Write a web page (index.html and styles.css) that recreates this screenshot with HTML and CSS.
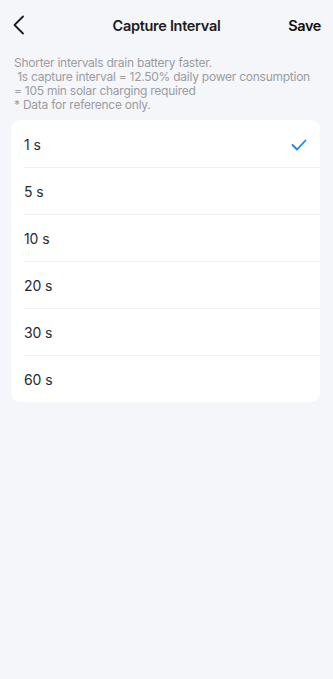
FILE: index.html
```html
<!DOCTYPE html>
<html>
<head>
<meta charset="utf-8">
<link rel="stylesheet" href="styles.css">
</head>
<body>
<div class="page">
  <header class="nav">
    <div class="back">
      <svg width="12" height="20" viewBox="0 0 12 20"><path d="M10 1.5 L1.5 10 L10 18.5" fill="none" stroke="#1c1c1e" stroke-width="1.8" stroke-linecap="round" stroke-linejoin="round"/></svg>
    </div>
    <div class="title">Capture Interval</div>
    <div class="save">Save</div>
  </header>
  <div class="desc">Shorter intervals drain battery faster.<br>&nbsp;1s capture interval = 12.50% daily power consumption<br>= 105 min solar charging required<br>* Data for reference only.</div>
  <div class="card">
    <div class="row"><span>1 s</span>
      <svg class="check" width="16" height="12" viewBox="0 0 16 12"><path d="M1.5 6 L6 10.5 L14.5 1.5" fill="none" stroke="#1a87e6" stroke-width="1.8" stroke-linecap="round" stroke-linejoin="round"/></svg>
    </div>
    <div class="row"><span>5 s</span></div>
    <div class="row"><span>10 s</span></div>
    <div class="row"><span>20 s</span></div>
    <div class="row"><span>30 s</span></div>
    <div class="row"><span>60 s</span></div>
  </div>
</div>
</body>
</html>
```
FILE: styles.css
```css
html, body {
  margin: 0;
  padding: 0;
  background: #f5f6fa;
}
body {
  font-family: Inter, "Noto Sans", sans-serif;
  color: #222;
}
.page {
  width: 333px;
  min-height: 679px;
}
.nav {
  height: 50px;
  display: grid;
  grid-template-columns: 60px 1fr 60px;
  align-items: center;
}
.back {
  padding-left: 13px;
  display: flex;
  align-items: center;
}
.title {
  text-align: center;
  font-size: 14.5px;
  font-weight: 600;
  letter-spacing: -0.3px;
  color: #1c1c1e;
}
.save {
  text-align: right;
  padding-right: 12px;
  font-size: 14.5px;
  font-weight: 600;
  letter-spacing: -0.4px;
  color: #111;
}
.desc {
  padding: 6px 14px 0 14px;
  font-size: 12px;
  letter-spacing: -0.25px;
  line-height: 14px;
  color: #9b9ca0;
  height: 64px;
}
.card {
  margin: 0 13px 0 11px;
  background: #fff;
  border-radius: 9px;
  overflow: hidden;
}
.row {
  height: 47px;
  margin-left: 13px;
  padding-right: 13px;
  display: flex;
  align-items: center;
  justify-content: space-between;
  font-size: 14px;
  letter-spacing: -0.1px;
  color: #2a2a2c;
  border-top: 1px solid #f0f1f3;
  box-sizing: border-box;
}
.row span {
  margin-top: 1px;
}
.row:first-child {
  border-top: none;
}
.check {
  display: block;
  margin-top: 2px;
}
```
